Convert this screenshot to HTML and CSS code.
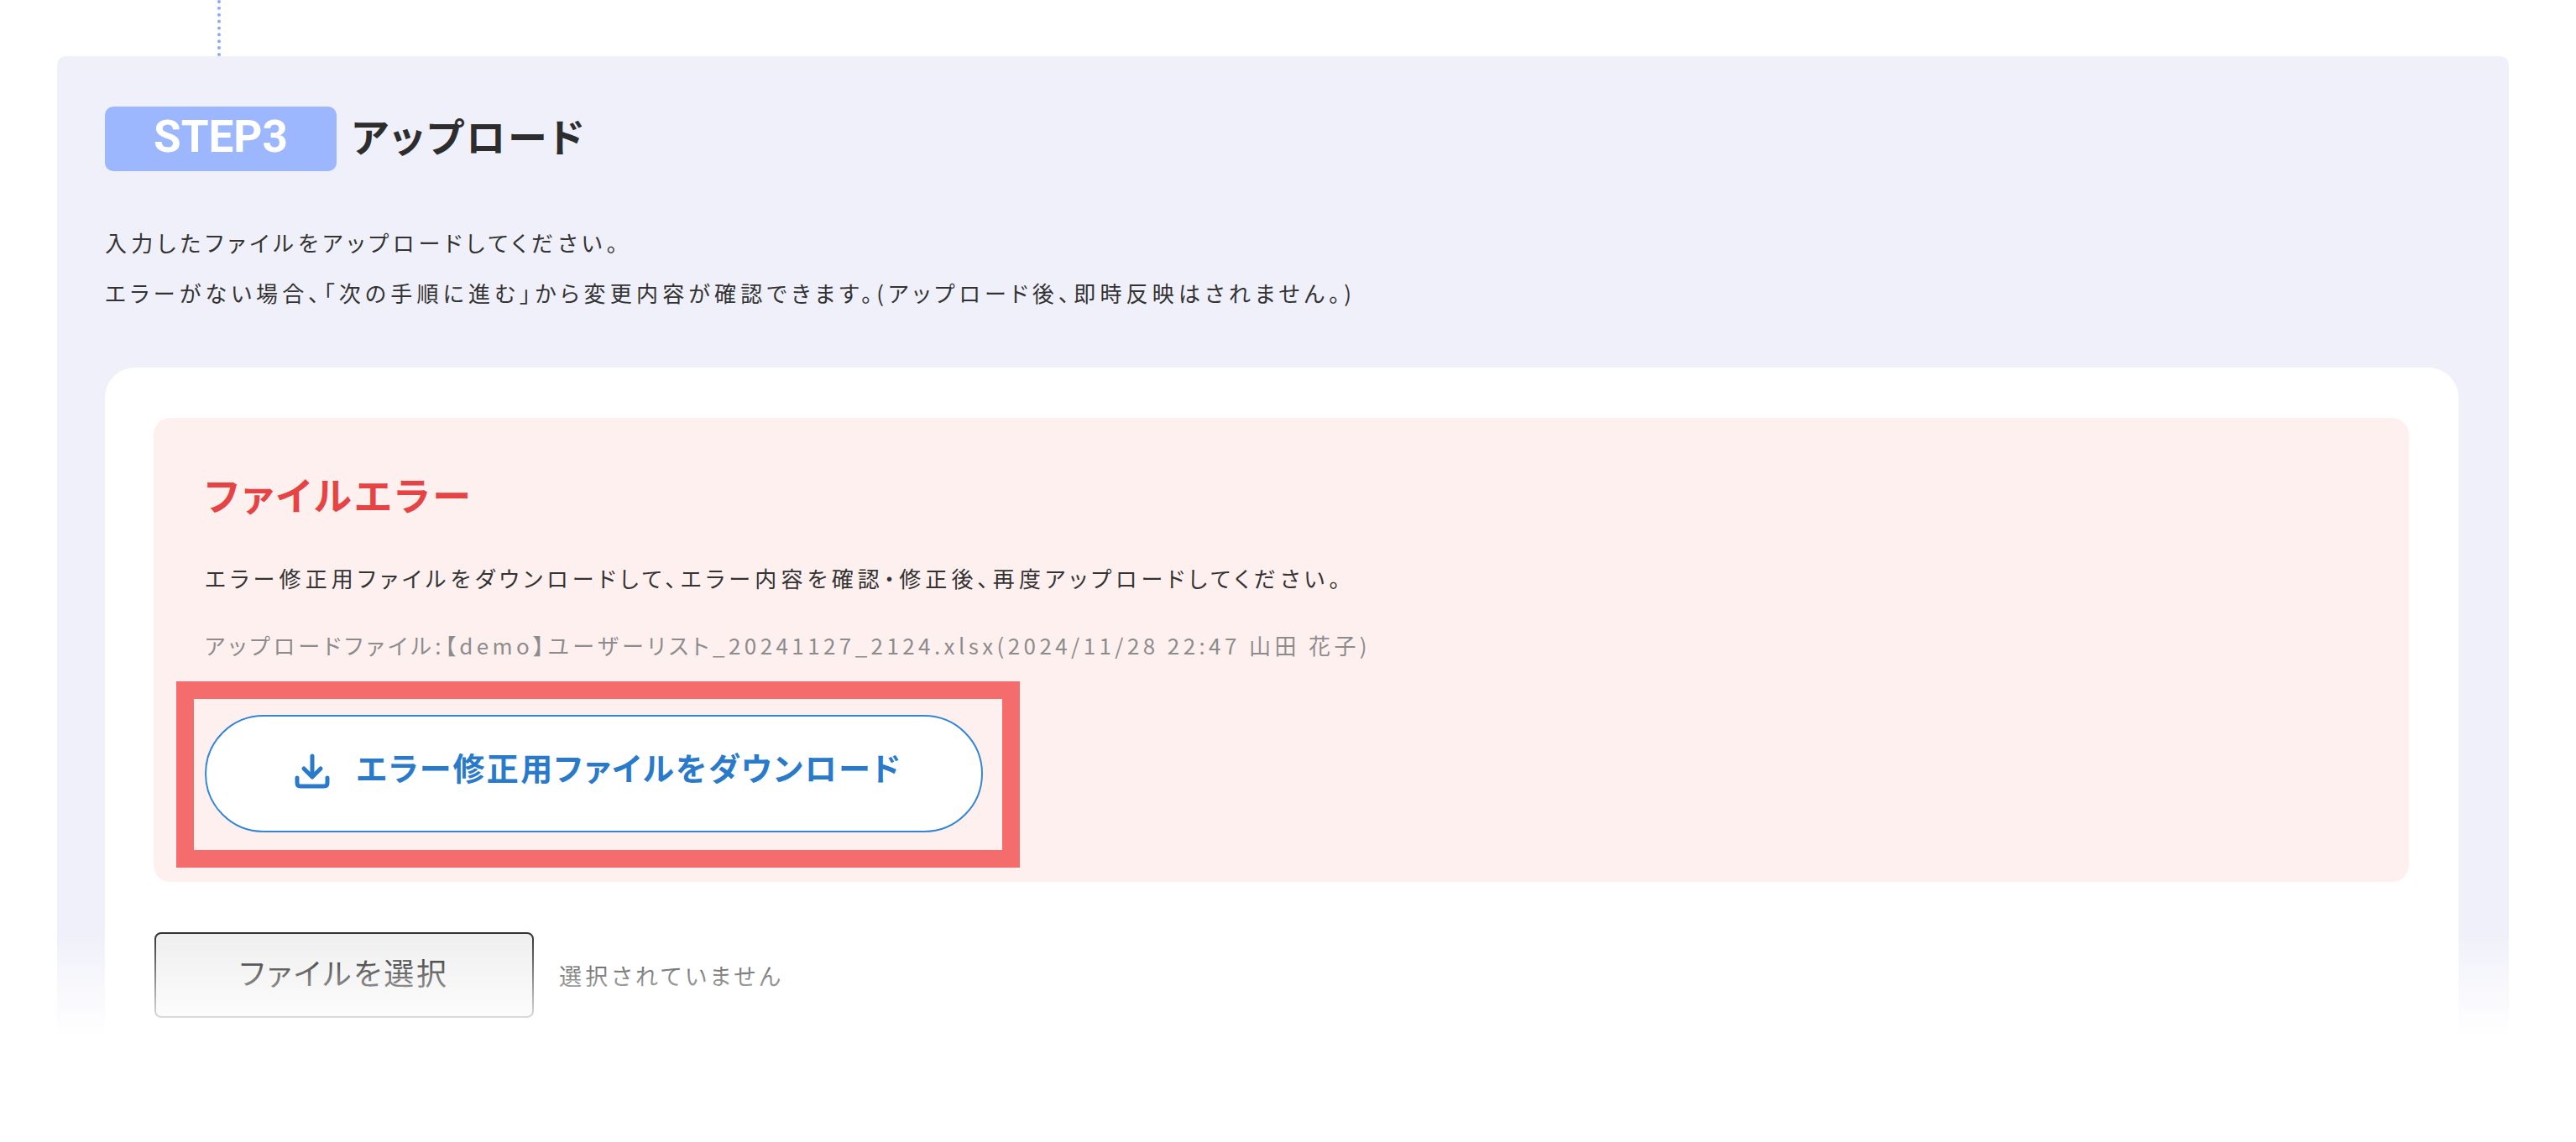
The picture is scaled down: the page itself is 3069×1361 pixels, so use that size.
FILE: index.html
```html
<!DOCTYPE html>
<html lang="ja">
<head>
<meta charset="utf-8">
<title>STEP3 アップロード</title>
<link rel="stylesheet" href="styles.css">
</head>
<body>
<div class="page">
  <div class="connector"></div>
  <section class="panel">
    <div class="step-head">
      <span class="badge">STEP3</span>
      <h2 class="step-title">アップロード</h2>
    </div>
    <div class="intro">
      <p>入力したファイルをアップロードしてください。</p>
      <p class="intro-long">エラーがない場合、「次の手順に進む」から変更内容が確認できます。(アップロード後、即時反映はされません。)</p>
    </div>
    <div class="card">
      <div class="error-box">
        <h3 class="error-title">ファイルエラー</h3>
        <p class="error-desc">エラー修正用ファイルをダウンロードして、エラー内容を確認・修正後、再度アップロードしてください。</p>
        <p class="error-file">アップロードファイル:【demo】ユーザーリスト_20241127_2124.xlsx(2024/11/28 22:47 山田 花子)</p>
        <div class="download-wrap">
          <a class="download-btn" href="#">
            <svg class="download-icon" viewBox="0 0 42 42" fill="none" stroke="currentColor" stroke-width="5" stroke-linecap="round" stroke-linejoin="round" aria-hidden="true">
              <path d="M21 3V27"/>
              <path d="M11 18L21 28L31 18"/>
              <path d="M3 29V35Q3 39 7 39H35Q39 39 39 35V29"/>
            </svg>
            <span>エラー修正用ファイルをダウンロード</span>
          </a>
          <div class="highlight"></div>
        </div>
      </div>
      <div class="file-row">
        <button class="file-btn" type="button">ファイルを選択</button>
        <span class="file-none">選択されていません</span>
      </div>
    </div>
  </section>
  <div class="fade"></div>
</div>
</body>
</html>
```
FILE: styles.css
```css
* { box-sizing: border-box; }
html, body { margin: 0; padding: 0; background: #fff; }
body {
  font-family: "Noto Sans CJK JP", "Noto Sans", sans-serif;
  color: #333;
  font-feature-settings: "palt";
}
p, h2, h3 { margin: 0; }
.page {
  position: relative;
  height: 1361px;
  overflow: hidden;
}
.connector {
  height: 67px;
  margin-left: 259px;
  border-left: 4px dotted #8aa8ff;
}
.panel {
  margin: 0 80px 0 68px;
  height: 1400px;
  padding: 60px 60px 0 57px;
  background: #f0f0fa;
  border-radius: 10px 10px 0 0;
}
.step-head {
  display: flex;
  align-items: center;
  gap: 18px;
}
.badge {
  width: 276px;
  height: 77px;
  display: flex;
  align-items: center;
  justify-content: center;
  background: #9db7ff;
  border-radius: 10px;
  color: #fff;
  font-family: Roboto, sans-serif;
  font-size: 53px;
  font-weight: 700;
  line-height: 1;
  padding-bottom: 4px;
}
.step-title {
  font-size: 47px;
  font-weight: 700;
  letter-spacing: 3px;
  line-height: 60px;
  padding-bottom: 10px;
  color: #2d2d2d;
}
.intro {
  margin-top: 55px;
  font-size: 26px;
  line-height: 60px;
  letter-spacing: 5.15px;
}
.intro-long {
  letter-spacing: 5.22px;
}
.card {
  margin-top: 59px;
  height: 900px;
  padding: 60px 59px 0 58px;
  background: #fff;
  border-radius: 36px 36px 0 0;
}
.error-box {
  padding: 60px 62px 59px 61px;
  background: #fff0f0;
  border-radius: 20px;
}
.error-title {
  font-size: 46px;
  font-weight: 700;
  line-height: 60px;
  letter-spacing: 3.6px;
  color: #e64444;
}
.error-desc {
  margin-top: 41px;
  font-size: 26px;
  line-height: 60px;
  letter-spacing: 5.15px;
}
.error-file {
  margin-top: 20px;
  font-size: 26px;
  line-height: 60px;
  letter-spacing: 4.4px;
  color: #8c8c8c;
}
.download-wrap {
  position: relative;
  width: 927px;
  margin-top: 53px;
}
.download-btn {
  height: 140px;
  display: flex;
  align-items: center;
  justify-content: center;
  gap: 32px;
  padding: 0 0 18px 10px;
  background: #fff;
  border: 2px solid #3585d6;
  border-radius: 70px;
  color: #2a7acb;
  font-size: 38px;
  font-weight: 700;
  letter-spacing: 2.3px;
  text-decoration: none;
}
.download-icon {
  width: 42px;
  height: 42px;
  margin-top: 12px;
  flex: none;
}
.highlight {
  position: absolute;
  top: -40px;
  left: -34px;
  right: -44px;
  bottom: -42px;
  border: 21px solid #f56c6c;
}
.file-row {
  display: flex;
  align-items: center;
  gap: 30px;
  margin-top: 60px;
  padding-left: 1px;
}
.file-btn {
  width: 452px;
  height: 102px;
  padding: 0 0 8px;
  font-family: inherit;
  font-feature-settings: inherit;
  font-size: 36px;
  letter-spacing: 2.8px;
  color: #111;
  background: #efefef;
  border: 2px solid #333;
  border-radius: 8px;
}
.file-none {
  font-size: 27px;
  letter-spacing: 4.2px;
  color: #333;
}
.fade {
  position: absolute;
  left: 0;
  right: 0;
  bottom: 0;
  height: 248px;
  background: linear-gradient(rgba(255,255,255,0), #fff 49%);
}
```
